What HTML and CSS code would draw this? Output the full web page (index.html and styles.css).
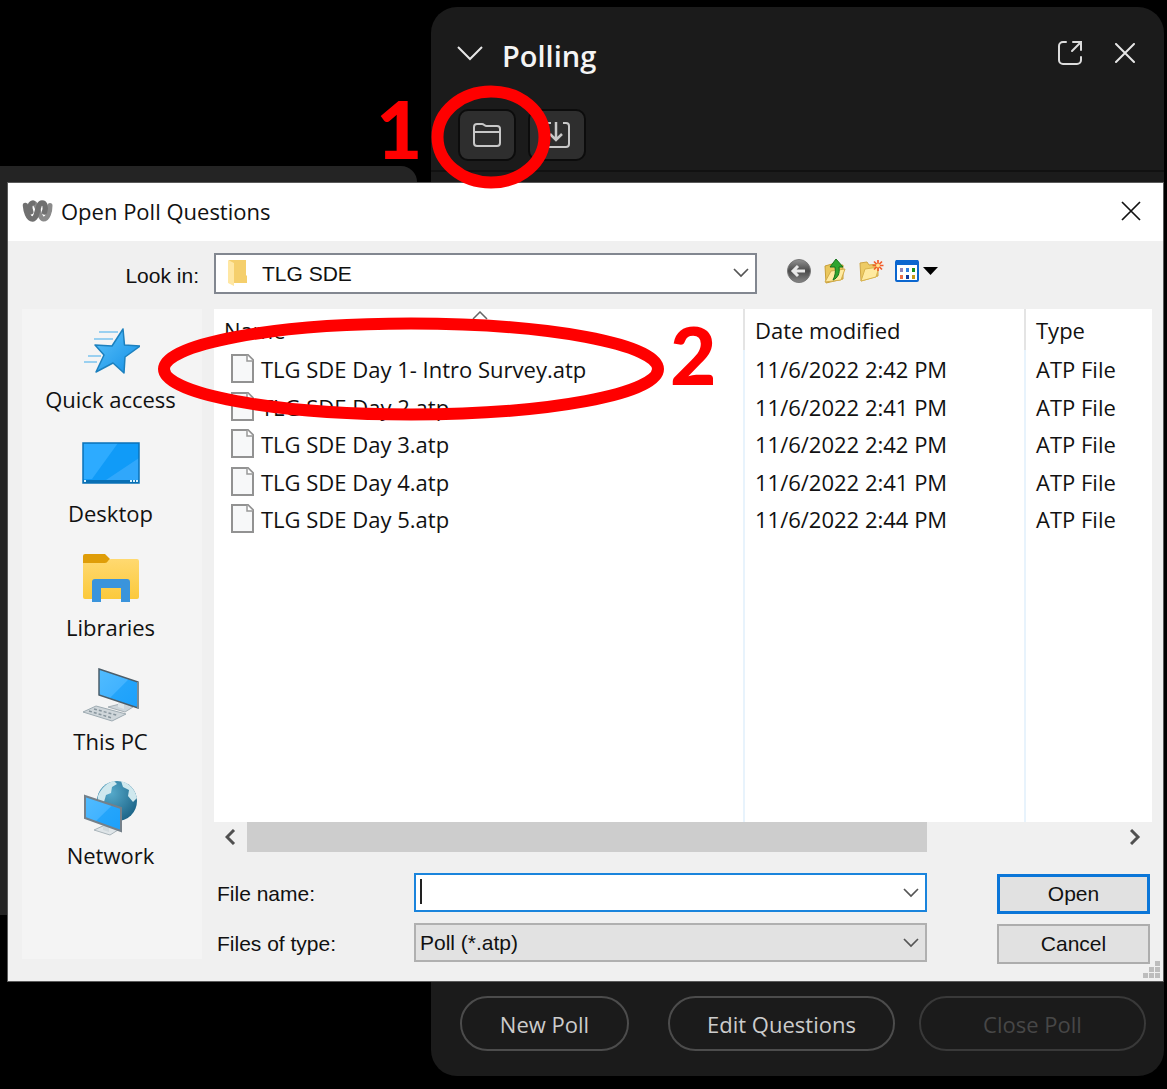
FILE: index.html
```html
<!DOCTYPE html>
<html lang="en">
<head>
<meta charset="utf-8">
<title>Open Poll Questions</title>
<link rel="stylesheet" href="styles.css">
</head>
<body>
<div class="desktop">
  <div class="back-window"></div>

  <section class="panel" aria-label="Polling">
    <header class="panel-header">
      <button class="icon-button" type="button" aria-label="Collapse">
        <svg width="28" height="18" viewBox="0 0 28 18" fill="none" stroke="#e6e6e6" stroke-width="2"><path d="M2 2l12 12L26 2"/></svg>
      </button>
      <h1 class="panel-title">Polling</h1>
      <button class="icon-button" type="button" aria-label="Pop out">
        <svg width="28" height="28" viewBox="0 0 28 28" fill="none" stroke="#dcdcdc" stroke-width="2" stroke-linecap="round"><path d="M10 2H7a4 4 0 0 0-4 4v14a4 4 0 0 0 4 4h14a4 4 0 0 0 4-4v-3M17 2h8v8M25 2l-9 9"/></svg>
      </button>
      <button class="icon-button" type="button" aria-label="Close panel">
        <svg width="22" height="22" viewBox="0 0 22 22" fill="none" stroke="#e6e6e6" stroke-width="2" stroke-linecap="round"><path d="M2 1l18 18M20 1L2 19"/></svg>
      </button>
    </header>
    <div class="panel-tools">
      <button class="tool" type="button" aria-label="Open poll">
        <svg width="30" height="26" viewBox="0 0 30 26" fill="none" stroke="#c8c8c8" stroke-width="2"><path d="M2 21V5a3 3 0 0 1 3-3h5c2 0 2.500 2 4.500 2H25a3 3 0 0 1 3 3v14a3 3 0 0 1-3 3H5a3 3 0 0 1-3-3zM2 10h26"/></svg>
      </button>
      <button class="tool" type="button" aria-label="Save poll">
        <svg width="30" height="28" viewBox="0 0 30 28" fill="none" stroke="#c8c8c8" stroke-width="2"><path d="M9 2H6a3 3 0 0 0-3 3v18a3 3 0 0 0 3 3h18a3 3 0 0 0 3-3V5a3 3 0 0 0-3-3h-3"/><path d="M14 1v18M8 13l6 6 6-6" stroke-width="2.500"/></svg>
      </button>
    </div>
    <footer class="panel-footer">
      <button class="pill pill-small" type="button">New Poll</button>
      <div class="pill-group">
        <button class="pill" type="button">Edit Questions</button>
        <button class="pill" type="button" disabled>Close Poll</button>
      </div>
    </footer>
  </section>

  <section class="dialog" role="dialog" aria-labelledby="dialog-title">
    <header class="title-bar">
      <svg width="32" height="24" viewBox="0 0 32 24" fill="none" stroke-linecap="round" stroke-linejoin="round"><path d="M28 6.500C28 12 26 20 21.500 20 17 20 16 4 11 4" stroke="#8a8a8a" stroke-width="5"/><path d="M3.500 6.500C4 12 6 20 10.500 20 16 20 15 4 20 4 23.500 4 24 9 22.500 13" stroke="#707070" stroke-width="5.500"/><path d="M11 4C8 4 7 8 9 13" stroke="#707070" stroke-width="5"/></svg>
      <h2 class="dialog-title" id="dialog-title">Open Poll Questions</h2>
      <button class="icon-button" type="button" aria-label="Close dialog">
        <svg width="20" height="20" viewBox="0 0 20 20" fill="none" stroke="#111" stroke-width="1.700"><path d="M1 1l18 18M19 1L1 19"/></svg>
      </button>
    </header>

    <div class="dialog-body">
      <label class="look-label" for="look-in">Look in:</label>
      <div class="location">
        <div class="combo look-combo">
          <svg class="combo-folder" width="22" height="28" viewBox="0 0 22 28"><path d="M2 1h17v15l1 1v7H6z" fill="#f5cf6c"/><path d="M1 1l6 3v23l-6-3z" fill="#ffe7a3"/></svg>
          <select class="field look-field" id="look-in"><option>TLG SDE</option></select>
          <svg class="chevron" width="16" height="10" viewBox="0 0 16 10" fill="none" stroke="#555" stroke-width="1.700"><path d="M1 1l7 7 7-7"/></svg>
        </div>
        <div class="nav-tools">
          <button class="icon-button" type="button" aria-label="Back">
            <svg width="26" height="26" viewBox="0 0 26 26"><defs><linearGradient id="orb" x1="0" y1="0" x2="0" y2="1"><stop offset="0" stop-color="#929292"/><stop offset=".5" stop-color="#4a4a4a"/><stop offset="1" stop-color="#858585"/></linearGradient></defs><circle cx="13" cy="13" r="11.500" fill="url(#orb)" stroke="#777"/><path d="M19 13H8M12 8l-5 5 5 5" fill="none" stroke="#e8e8e8" stroke-width="3"/></svg>
          </button>
          <button class="icon-button" type="button" aria-label="Up one level">
            <svg width="24" height="26" viewBox="0 0 24 26"><path d="M2 8l7-2 2 2 9-1v14L3 25z" fill="#eac75c" stroke="#c89f38"/><path d="M2 24L8 13l14-2-4 11z" fill="#ffeaa0" stroke="#d4ad4b"/><path d="M13 1l7 8h-4c1 6-1 11-6 13 2-4 3-8 2-13H7z" fill="#2fa52f" stroke="#16731b"/></svg>
          </button>
          <button class="icon-button" type="button" aria-label="New folder">
            <svg width="26" height="26" viewBox="0 0 26 26"><path d="M2 5l7-1 2 3 9-1v12L3 23z" fill="#edcb65" stroke="#cfa645"/><path d="M3 23l4-12 14-2-3 10z" fill="#ffeaa0" stroke="#d9b44e"/><path d="M20 2v11M14.500 7.500h11M16 3.500l8 8M24 3.500l-8 8" stroke="#f15b2a" stroke-width="1.700"/><circle cx="20" cy="7.500" r="2" fill="#ffe08a"/></svg>
          </button>
          <button class="icon-button" type="button" aria-label="View menu">
            <svg width="46" height="26" viewBox="0 0 46 26"><rect x="1" y="3" width="22" height="20" rx="1" fill="#fff" stroke="#0b66cf" stroke-width="2"/><path d="M1 2h22v5H1z" fill="#0b66cf"/><path fill="#8d84bb" d="M5 10h3v4H5z"/><path fill="#2f7fe0" d="M11 10h3v4h-3z"/><path fill="#18901c" d="M17 10h3v4h-3z"/><path fill="#f06c45" d="M5 17h3v4H5z"/><path fill="#123a9c" d="M11 17h3v4h-3z"/><path fill="#c79b13" d="M17 17h3v4h-3z"/><path d="M28 9h15l-7.500 8z"/></svg>
          </button>
        </div>
      </div>

      <nav class="places" aria-label="Places">
        <a class="place" href="#quick">
          <svg width="58" height="56" viewBox="0 0 58 56"><defs><linearGradient id="star" x1="0" y1="0" x2="1" y2="1"><stop offset="0" stop-color="#5cc2fa"/><stop offset="1" stop-color="#128fe6"/></linearGradient></defs><path d="M41 5l1.500 16L58 22 43 33l-1 16-11-10-17 9 8-17-9-10 17 1z" fill="url(#star)" stroke="#1c80be" stroke-width="1.500" stroke-linejoin="round"/><path d="M17 8h19M12 15h19M6 32h13M2 38h13" stroke="#7cc4ee" stroke-width="1.500"/></svg>
          Quick access</a>
        <a class="place" href="#desktop">
          <svg width="58" height="56" viewBox="0 0 58 56"><path d="M1 5h56v40H1z" fill="#109bf8"/><path d="M1 5h35L10 41H1z" fill="#2dabff"/><path d="M57 20v22H24z" fill="#30a7fb"/><path d="M1 5h56v40H1z" fill="none" stroke="#0a72b8" stroke-width="1.500"/><path d="M1 42h56v3H1z" fill="#086fb4"/><path d="M2 43h2M48 43h2M51 43h2M54 43h2" stroke="#d8f2ff" stroke-width="2"/></svg>
          Desktop</a>
        <a class="place" href="#libraries">
          <svg width="58" height="56" viewBox="0 0 58 56"><defs><linearGradient id="fold" x1="0" y1="0" x2="0" y2="1"><stop offset="0" stop-color="#ffd970"/><stop offset="1" stop-color="#fbc93b"/></linearGradient></defs><path d="M1 14V4a2 2 0 0 1 2-2h20l5 5-4 7z" fill="#df9d08"/><path d="M1 11h22c3 0 3-4 6-4h26a2 2 0 0 1 2 2v36a2 2 0 0 1-2 2H3a2 2 0 0 1-2-2z" fill="url(#fold)"/><path d="M10 50V30a3 3 0 0 1 3-3h32a3 3 0 0 1 3 3v20h-9V36H19v14z" fill="#3a94dc"/></svg>
          Libraries</a>
        <a class="place" href="#pc">
          <svg width="58" height="56" viewBox="0 0 58 56"><defs><linearGradient id="scr" x1="0" y1="0" x2="1" y2="1"><stop offset="0" stop-color="#51bcff"/><stop offset=".5" stop-color="#42b3ff"/><stop offset=".52" stop-color="#24a5fb"/><stop offset="1" stop-color="#1ba0fb"/></linearGradient></defs><path d="M26 41l16-4 9 4-8 5z" fill="#cdd5da" stroke="#a5afb5"/><path d="M36 35v6l6 2v-6z" fill="#dfe5e8"/><path d="M1 46l13-6 30 8-14 7z" fill="#cfd6da" stroke="#9eabb2"/><path d="M7 45l23 7M12 43l24 6.500" stroke="#87959d" stroke-width="1.500" stroke-dasharray="3 2"/><path d="M17 3l39 13v26L17 29z" fill="url(#scr)" stroke="#4c5d69" stroke-width="1.500"/><path d="M56 16v26" stroke="#7c8b94" stroke-width="2"/></svg>
          This PC</a>
        <a class="place" href="#network">
          <svg width="58" height="56" viewBox="0 0 58 56"><defs><radialGradient id="globe" cx=".35" cy=".3" r=".75"><stop offset="0" stop-color="#56aacb"/><stop offset="1" stop-color="#1d6588"/></radialGradient></defs><circle cx="35" cy="21" r="20" fill="url(#globe)"/><path d="M16 16c3-8 10-14 16-15l3 3-5 3-1 6-5 2-2 7-6 2zM39 1c8 2 14 8 16 17l-4 4-5-6 1-6-6-3z" fill="#cfe8ee"/><path d="M12 50l11-5 13 5-8 5z" fill="#dfe5e8" stroke="#aab5bb"/><path d="M21 42v8l6 2v-8z" fill="#d1d9dd"/><path d="M3 16l36 12v23L3 38z" fill="url(#scr)" stroke="#74808a" stroke-width="2"/></svg>
          Network</a>
      </nav>

      <div class="main">
        <div class="listing">
          <svg class="sort-mark" width="16" height="9" viewBox="0 0 16 9" fill="none" stroke="#666" stroke-width="1.500"><path d="M1 8l7-7 7 7"/></svg>
          <table class="files">
            <thead>
              <tr><th>Name</th><th class="col-date">Date modified</th><th class="col-type">Type</th></tr>
            </thead>
            <tbody>
              <tr><td><span class="file"><svg class="page" width="24" height="30" viewBox="0 0 24 30"><path d="M2 1h16l5 5v22H2z" fill="#f7f8f9" stroke="#929292" stroke-width="2"/><path d="M17 1v6h6" fill="#fff" stroke="#999" stroke-width="1.500"/></svg>TLG SDE Day 1- Intro Survey.atp</span></td><td>11/6/2022 2:42 PM</td><td>ATP File</td></tr>
              <tr><td><span class="file"><svg class="page" width="24" height="30" viewBox="0 0 24 30"><path d="M2 1h16l5 5v22H2z" fill="#f7f8f9" stroke="#929292" stroke-width="2"/><path d="M17 1v6h6" fill="#fff" stroke="#999" stroke-width="1.500"/></svg>TLG SDE Day 2.atp</span></td><td>11/6/2022 2:41 PM</td><td>ATP File</td></tr>
              <tr><td><span class="file"><svg class="page" width="24" height="30" viewBox="0 0 24 30"><path d="M2 1h16l5 5v22H2z" fill="#f7f8f9" stroke="#929292" stroke-width="2"/><path d="M17 1v6h6" fill="#fff" stroke="#999" stroke-width="1.500"/></svg>TLG SDE Day 3.atp</span></td><td>11/6/2022 2:42 PM</td><td>ATP File</td></tr>
              <tr><td><span class="file"><svg class="page" width="24" height="30" viewBox="0 0 24 30"><path d="M2 1h16l5 5v22H2z" fill="#f7f8f9" stroke="#929292" stroke-width="2"/><path d="M17 1v6h6" fill="#fff" stroke="#999" stroke-width="1.500"/></svg>TLG SDE Day 4.atp</span></td><td>11/6/2022 2:41 PM</td><td>ATP File</td></tr>
              <tr><td><span class="file"><svg class="page" width="24" height="30" viewBox="0 0 24 30"><path d="M2 1h16l5 5v22H2z" fill="#f7f8f9" stroke="#929292" stroke-width="2"/><path d="M17 1v6h6" fill="#fff" stroke="#999" stroke-width="1.500"/></svg>TLG SDE Day 5.atp</span></td><td>11/6/2022 2:44 PM</td><td>ATP File</td></tr>
              <tr class="filler" aria-hidden="true"><td></td><td></td><td></td></tr>
            </tbody>
          </table>
        </div>
        <div class="scroll-bar">
          <button class="scroll-arrow" type="button" aria-label="Scroll left"><svg width="12" height="16" viewBox="0 0 12 16" fill="none" stroke="#505050" stroke-width="3"><path d="M9 1L2 8l7 7"/></svg></button>
          <div class="scroll-track"><div class="scroll-thumb"></div></div>
          <button class="scroll-arrow" type="button" aria-label="Scroll right"><svg width="12" height="16" viewBox="0 0 12 16" fill="none" stroke="#505050" stroke-width="3"><path d="M1 1l7 7-7 7"/></svg></button>
        </div>
        <form class="open-form">
          <label for="file-name">File name:</label>
          <div class="combo name-combo">
            <input class="field name-field" id="file-name" type="text">
            <svg class="chevron" width="16" height="10" viewBox="0 0 16 10" fill="none" stroke="#555" stroke-width="1.700"><path d="M1 1l7 7 7-7"/></svg>
          </div>
          <button class="action action-default" type="button">Open</button>
          <label for="file-type">Files of type:</label>
          <div class="combo">
            <select class="field type-field" id="file-type"><option>Poll (*.atp)</option></select>
            <svg class="chevron" width="16" height="10" viewBox="0 0 16 10" fill="none" stroke="#555" stroke-width="1.700"><path d="M1 1l7 7 7-7"/></svg>
          </div>
          <button class="action" type="button">Cancel</button>
        </form>
      </div>
    </div>
    <svg class="grip" width="18" height="18" viewBox="0 0 18 18" fill="#bdbdbd"><path d="M13 0h5v5h-5zM7 6h5v5H7zM13 6h5v5h-5zM1 12h5v5H1zM7 12h5v5H7zM13 12h5v5h-5z"/></svg>
  </section>

  <svg class="mark ring-one" width="120" height="104" viewBox="0 0 120 104" fill="none" stroke="#f00" stroke-width="12"><ellipse cx="60" cy="52" rx="53.500" ry="45.500"/></svg>
  <span class="mark number number-one">1</span>
  <svg class="mark ring-two" width="508" height="104" viewBox="0 0 508 104" fill="none" stroke="#f00" stroke-width="12"><ellipse cx="254" cy="52" rx="247" ry="45.500"/></svg>
  <span class="mark number number-two">2</span>
</div>
</body>
</html>
```
FILE: styles.css
```css
* { box-sizing: border-box; }

body {
  margin: 0;
  background: #000;
  font-family: "Open Sans", "Noto Sans", sans-serif;
  font-size: 22px;
  line-height: 30px;
  color: #111;
}

svg { display: block; flex: none; }

button, input, select { font: inherit; color: inherit; margin: 0; }

.icon-button {
  display: flex;
  padding: 0;
  border: 0;
  background: none;
}

.desktop {
  position: relative;
  min-height: 100vh;
  padding: 182px 3px 107px 7px;
  overflow: hidden;
}

.back-window {
  position: absolute;
  top: 166px;
  left: 0;
  width: 417px;
  bottom: 174px;
  border-radius: 0 16px 0 0;
  background: #242424;
}

/* Polling panel */
.panel {
  position: absolute;
  top: 7px;
  right: 3px;
  bottom: 13px;
  left: 431px;
  display: flex;
  flex-direction: column;
  border-radius: 26px;
  background: #1b1b1b;
  color: #ccc;
}

.panel-header {
  display: flex;
  align-items: center;
  gap: 30px;
  padding: 28px 28px 0 25px;
  height: 66px;
}

.panel-title {
  flex: 1;
  margin: 0 0 0 -12px;
  padding-top: 4px;
  font-size: 29px;
  line-height: 32px;
  font-weight: 600;
  color: #f4f4f4;
}

.panel-tools {
  display: flex;
  gap: 12px;
  padding: 36px 27px 9px;
  border-bottom: 2px solid #111;
}

.tool {
  display: flex;
  align-items: center;
  justify-content: center;
  width: 58px;
  height: 52px;
  padding: 0;
  border: 2px solid #0c0c0c;
  border-radius: 10px;
  background: #2e2e2e;
}

.panel-footer {
  display: flex;
  justify-content: space-between;
  margin-top: auto;
  padding: 0 18px 25px 29px;
}

.pill-group { display: flex; gap: 24px; }

.pill {
  width: 227px;
  height: 55px;
  padding: 0;
  border: 2px solid #4c4c4c;
  border-radius: 28px;
  background: none;
}

.pill-small { width: 169px; }

.pill:disabled { border-color: #393939; color: #474747; }

/* Open dialog */
.dialog {
  position: relative;
  border: 1px solid #5a5a5a;
  background: #f0f0f0;
}

.title-bar {
  display: flex;
  align-items: center;
  gap: 7px;
  height: 58px;
  padding: 0 22px 2px 14px;
  background: #fff;
}

.dialog-title {
  flex: 1;
  margin: 0;
  font-size: 22px;
  font-weight: 400;
}

.dialog-body {
  display: grid;
  grid-template-columns: 180px 1fr;
  gap: 15px 12px;
  padding: 12px 11px 17px 14px;
  font-family: "Liberation Sans", Arial, sans-serif;
  font-size: 21px;
}

.look-label { align-self: center; padding: 4px 3px 0 0; text-align: right; }

.location { display: flex; align-items: center; gap: 29px; }

.look-combo { flex: 0 1 543px; }

.nav-tools {
  display: flex;
  align-items: center;
  gap: 11px;
  padding-bottom: 5px;
}

.combo { position: relative; }

.field {
  display: block;
  width: 100%;
  height: 39px;
  padding: 0 4px;
  border: 2px solid #b0b0b0;
  border-radius: 0;
  background: #e2e2e2;
  appearance: none;
  outline: 0;
}

.look-field {
  height: 41px;
  padding-left: 46px;
  border-color: #828790;
  background: #fff;
}

.name-field { border-color: #1a84dc; background: #fff; }

.name-combo::before {
  content: "";
  position: absolute;
  top: 6px;
  left: 6px;
  width: 2px;
  height: 25px;
  background: #222;
}

.combo-folder { position: absolute; top: 6px; left: 13px; }

.chevron { position: absolute; top: 15px; right: 8px; }

.places {
  display: flex;
  flex-direction: column;
  gap: 24px;
  margin-bottom: 5px;
  padding: 15px 3px 0 0;
  background: #f4f4f4;
  font-family: "Open Sans", "Noto Sans", sans-serif;
  font-size: 22px;
}

.place {
  display: flex;
  flex-direction: column;
  align-items: center;
  gap: 4px;
  color: inherit;
  text-decoration: none;
}

.main { display: flex; flex-direction: column; }

.listing { position: relative; background: #fff; }

.sort-mark { position: absolute; top: 2px; left: 258px; }

.files {
  width: 100%;
  height: 513px;
  table-layout: fixed;
  border-collapse: separate;
  border-spacing: 0;
  font-family: "Open Sans", "Noto Sans", sans-serif;
  font-size: 22px;
}

.files th {
  height: 41px;
  padding: 0 10px;
  border-right: 2px solid #e4e4e4;
  font-weight: 400;
  text-align: left;
}

.files td {
  height: 38px;
  padding: 0 10px;
  border-right: 2px solid #e8f3fc;
  white-space: nowrap;
}

.files tr:nth-child(even) td { height: 37px; }
.files td:first-child { padding-left: 16px; }
.files th:last-child, .files td:last-child { border-right: 0; }
.files tr.filler td { height: auto; }

.col-date { width: 281px; }
.col-type { width: 126px; }

.file { display: flex; align-items: center; gap: 7px; }

.scroll-bar { display: flex; height: 30px; }

.scroll-arrow {
  display: flex;
  align-items: center;
  justify-content: center;
  width: 33px;
  padding: 0;
  border: 0;
  background: none;
}

.scroll-track { flex: 1; }

.scroll-thumb { width: 78%; height: 100%; background: #cdcdcd; }

.open-form {
  display: grid;
  grid-template-columns: 197px 1fr 153px;
  grid-auto-rows: 40px;
  gap: 10px 0;
  align-items: center;
  padding: 22px 2px 0 3px;
}

.open-form .combo { align-self: start; margin: -1px 70px 0 0; }

.action {
  height: 40px;
  padding: 0;
  border: 2px solid #adadad;
  background: #e1e1e1;
}

.action-default { border: 3px solid #0b76d8; }

.grip { position: absolute; right: 3px; bottom: 2px; }

/* Callouts */
.mark { position: absolute; }

.ring-one { top: 85px; left: 431px; }
.ring-two { top: 317px; left: 157px; }

.number {
  font-family: Lato, sans-serif;
  font-size: 80px;
  line-height: 80px;
  font-weight: 900;
  color: #f00;
}

.number-one { top: 88px; left: 376px; }
.number-two { top: 314px; left: 670px; }
```
